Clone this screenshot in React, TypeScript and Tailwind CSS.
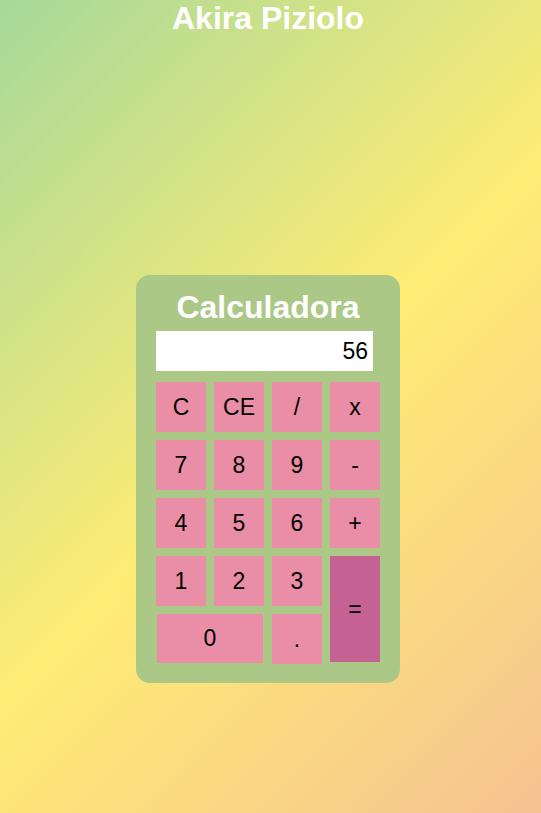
import { useState } from "react";

const keys: { label: string; className?: string }[] = [
  { label: "C" },
  { label: "CE" },
  { label: "/" },
  { label: "x" },
  { label: "7" },
  { label: "8" },
  { label: "9" },
  { label: "-" },
  { label: "4" },
  { label: "5" },
  { label: "6" },
  { label: "+" },
  { label: "1" },
  { label: "2" },
  { label: "3" },
  { label: "=", className: "row-span-2 mb-[2px] bg-[#c56293]" },
  { label: "0", className: "col-span-2 mx-[1px] mb-[1px] bg-[#e98ea6]" },
  { label: "." },
];

export default function App() {
  const [display] = useState("56");

  return (
    <div className="min-h-screen w-full bg-[linear-gradient(135deg,#a6d99a_0%,#ffec74_52%,#f6c292_100%)] pr-[5px] font-['Liberation_Sans',Arial,sans-serif]">
      <h1 className="m-0 text-center text-[32px] font-bold leading-[37px] text-white">Akira Piziolo</h1>

      <div className="flex justify-center pt-[238px]">
        <div className="w-[264px] rounded-[14px] bg-[#acc886] px-5 pb-[19px] pt-[14px]">
          <h2 className="text-center text-[32px] font-bold leading-[37px] text-white">Calculadora</h2>

          <div className="mt-[5px] flex h-10 w-[217px] items-center justify-end bg-white pr-[5px] text-[23px] text-black">
            {display}
          </div>

          <div className="mt-[11px] grid grid-cols-[repeat(4,50px)] grid-rows-[repeat(5,50px)] gap-2">
            {keys.map((k) => (
              <button
                key={k.label}
                className={`flex items-center justify-center text-[23px] text-black ${k.className ?? "bg-[#e98ea6]"}`}
              >
                {k.label}
              </button>
            ))}
          </div>
        </div>
      </div>
    </div>
  );
}
